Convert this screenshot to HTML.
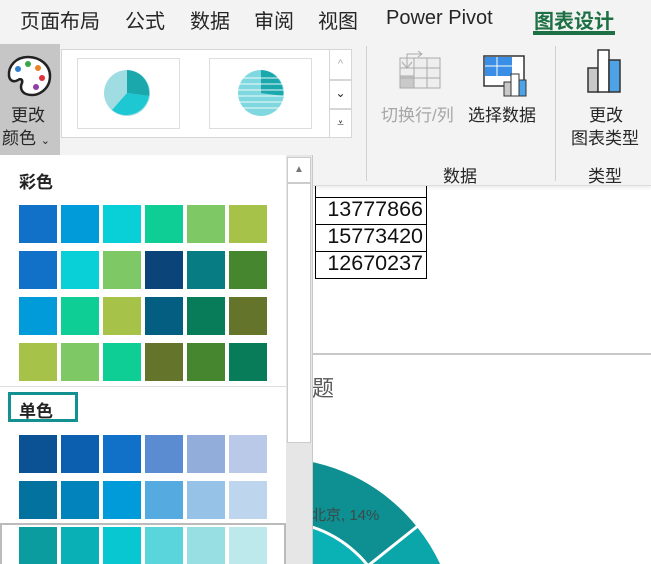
<!DOCTYPE html>
<html><head><meta charset="utf-8"><style>
*{margin:0;padding:0;box-sizing:border-box}
html,body{width:651px;height:564px;overflow:hidden}
body{background:#fff;position:relative;font-family:"Liberation Sans","Noto Sans CJK SC",sans-serif;color:#262626}
.a{position:absolute}
.t{font-size:20px;top:5px;color:#262626}
.sw{position:absolute;width:38px;height:38px}
</style></head><body>
<div class="a" style="left:0;top:0;width:651px;height:186px;background:#f3f3f3;border-bottom:1px solid #dcdcdc;box-shadow:0 2px 3px rgba(0,0,0,.08)"></div>
<div class="a t" style="left:20px">页面布局</div>
<div class="a t" style="left:125px">公式</div>
<div class="a t" style="left:190px">数据</div>
<div class="a t" style="left:254px">审阅</div>
<div class="a t" style="left:318px">视图</div>
<div class="a t" style="left:386px;top:7px">Power Pivot</div>
<div class="a t" style="left:534px;color:#1e7145;font-weight:bold">图表设计</div>
<div class="a" style="left:533px;top:31px;width:82px;height:4px;background:#1e7145"></div>

<div class="a" style="left:0;top:44px;width:60px;height:112px;background:#c6c6c6"></div>
<svg class="a" style="left:6px;top:54px" width="46" height="46" viewBox="0 0 46 46">
<path d="M22 3C10 3 2 12 3 22c1 6 6 6 9 4 3-2 5 0 4 3-2 4-1 9 4 11 12 4 24-5 24-18C44 11 34 3 22 3z" fill="#fff" stroke="#222" stroke-width="2.5"/>
<circle cx="12" cy="15" r="3" fill="#2f7fd0"/><circle cx="22" cy="10" r="3" fill="#3aa64a"/><circle cx="32" cy="14" r="3" fill="#e8832a"/><circle cx="36" cy="24" r="3" fill="#e0303a"/><circle cx="30" cy="33" r="3" fill="#8e3fa8"/></svg>
<div class="a" style="left:11px;top:101px;font-size:17px">更改</div>
<div class="a" style="left:2px;top:124px;font-size:17px">颜色 <span style="font-size:11px">⌄</span></div>

<div class="a" style="left:61px;top:49px;width:269px;height:89px;background:#fff;border:1px solid #d6d6d6"></div>
<div class="a" style="left:77px;top:58px;width:103px;height:71px;background:#fff;border:1px solid #ddd"></div>
<svg class="a" style="left:102px;top:68px" width="50" height="50"><circle cx="25" cy="25" r="23" fill="#9fdde3"/><path d="M25 25V2A23 23 0 0 1 47 28Z" fill="#1aa8ad"/><path d="M25 25L47 28A23 23 0 0 1 10 42Z" fill="#1ec8d3"/></svg>
<div class="a" style="left:209px;top:58px;width:103px;height:71px;background:#fff;border:1px solid #ddd"></div>
<svg class="a" style="left:236px;top:68px" width="50" height="50"><circle cx="25" cy="25" r="23" fill="#7fd8df"/><path d="M25 25V2A23 23 0 0 1 47 28Z" fill="#1aa8ad"/><g stroke="#fff" stroke-width="1.5" opacity=".6"><line x1="0" y1="10" x2="50" y2="10"/><line x1="0" y1="16" x2="50" y2="16"/><line x1="0" y1="22" x2="50" y2="22"/><line x1="0" y1="28" x2="50" y2="28"/><line x1="0" y1="34" x2="50" y2="34"/><line x1="0" y1="40" x2="50" y2="40"/></g></svg>
<div class="a" style="left:329px;top:49px;width:23px;height:31px;background:#fff;border:1px solid #d6d6d6;color:#aaa;font-size:11px;text-align:center;line-height:29px">^</div>
<div class="a" style="left:329px;top:80px;width:23px;height:29px;background:#fff;border:1px solid #d6d6d6;font-size:12px;text-align:center;line-height:25px">⌄</div>
<div class="a" style="left:329px;top:109px;width:23px;height:29px;background:#fff;border:1px solid #d6d6d6;font-size:12px;text-align:center;line-height:27px">⩡</div>

<div class="a" style="left:366px;top:46px;width:1px;height:135px;background:#d0d0d0"></div>
<div class="a" style="left:555px;top:46px;width:1px;height:135px;background:#d0d0d0"></div>
<svg class="a" style="left:396px;top:48px" width="48" height="44"><g fill="#c9c9c9" stroke="#aaa"><rect x="4" y="10" width="40" height="30" fill="#eee"/><rect x="4" y="28" width="14" height="12"/></g><g stroke="#aaa" fill="none"><line x1="4" y1="20" x2="44" y2="20"/><line x1="4" y1="30" x2="44" y2="30"/><line x1="18" y1="10" x2="18" y2="40"/><line x1="31" y1="10" x2="31" y2="40"/><path d="M6 14l5 6 5-6M11 20V6h14M22 3l4 3-4 3"/></g></svg>
<div class="a" style="left:381px;top:101px;font-size:17px;color:#a6a6a6">切换行/列</div>
<svg class="a" style="left:482px;top:54px" width="48" height="44"><rect x="2" y="2" width="40" height="30" fill="#fff" stroke="#333" stroke-width="1.5"/><rect x="3" y="3" width="27" height="19" fill="#3a8ee6"/><g stroke="#fff"><line x1="3" y1="12" x2="30" y2="12"/><line x1="15" y1="3" x2="15" y2="22"/></g><rect x="22" y="28" width="7" height="14" fill="#c8c8c8" stroke="#333"/><rect x="29" y="20" width="8" height="22" fill="#fff" stroke="#333"/><rect x="37" y="26" width="7" height="16" fill="#4ea3e6" stroke="#333"/></svg>
<div class="a" style="left:468px;top:101px;font-size:17px">选择数据</div>
<svg class="a" style="left:585px;top:45px" width="44" height="50"><rect x="3" y="23" width="10" height="24" fill="#c8c8c8" stroke="#333" stroke-width="1.5"/><rect x="13" y="5" width="11" height="42" fill="#fff" stroke="#333" stroke-width="1.5"/><rect x="24" y="15" width="11" height="32" fill="#4ea3e6" stroke="#333" stroke-width="1.5"/></svg>
<div class="a" style="left:589px;top:101px;font-size:17px">更改</div>
<div class="a" style="left:571px;top:124px;font-size:17px">图表类型</div>
<div class="a" style="left:443px;top:162px;font-size:17px">数据</div>
<div class="a" style="left:588px;top:162px;font-size:17px">类型</div>

<div class="a" style="left:315px;top:186px;width:112px;height:93px;border:1px solid #000;border-top:none"></div>
<div class="a" style="left:315px;top:224px;width:112px;height:1px;background:#000"></div>
<div class="a" style="left:315px;top:251px;width:112px;height:1px;background:#000"></div>
<div class="a" style="left:315px;top:197px;width:112px;height:1px;background:#000"></div>
<div class="a" style="left:315px;top:197px;width:108px;text-align:right;font-size:21.5px;color:#111">13777866</div>
<div class="a" style="left:315px;top:224px;width:108px;text-align:right;font-size:21.5px;color:#111">15773420</div>
<div class="a" style="left:315px;top:251px;width:108px;text-align:right;font-size:21.5px;color:#111">12670237</div>
<div class="a" style="left:313px;top:353px;width:338px;height:2px;background:#c8c8c8"></div>
<div class="a" style="left:312px;top:371px;font-size:22px;color:#595959">题</div>
<svg class="a" style="left:300px;top:440px" width="351" height="124"><g transform="translate(-300,-440)">
<path d="M275 640L275 458A182 182 0 0 1 417 527Z" fill="#0e8f91"/>
<path d="M275 640L417 527A182 182 0 0 1 457 650Z" fill="#0aa6a9"/>
<circle cx="275" cy="640" r="119" fill="#0ab2b6" stroke="#fff" stroke-width="3"/>
<line x1="275" y1="640" x2="419" y2="525" stroke="#fff" stroke-width="3"/></g></svg>
<div class="a" style="left:311px;top:504px;font-size:15px;color:#3a4a4a">北京, 14%</div>

<div class="a" style="left:0;top:155px;width:313px;height:409px;background:#fff;border-right:2px solid #c8c8c8"></div>
<div class="a" style="left:286px;top:155px;width:26px;height:409px;background:#e6e6e6"></div>
<div class="a" style="left:287px;top:157px;width:24px;height:26px;background:#fff;border:1px solid #ccc;font-size:10px;color:#777;text-align:center;line-height:24px">▲</div>
<div class="a" style="left:287px;top:183px;width:24px;height:260px;background:#fff;border:1px solid #ccc"></div>
<div class="a" style="left:19px;top:168px;font-size:17px;font-weight:bold;color:#222">彩色</div>
<div class="a" style="left:0;top:386px;width:286px;height:1px;background:#ddd"></div>
<div class="a" style="left:8px;top:392px;width:70px;height:30px;border:3px solid #13908f"></div>
<div class="a" style="left:19px;top:397px;font-size:17px;font-weight:bold;color:#222">单色</div>
<div class="a" style="left:0;top:523px;width:286px;height:41px;border:2px solid #bbb;border-bottom:none"></div>
<div class="sw" style="left:19px;top:205px;background:#1170c8"></div><div class="sw" style="left:61px;top:205px;background:#009bd8"></div><div class="sw" style="left:103px;top:205px;background:#09d0d6"></div><div class="sw" style="left:145px;top:205px;background:#0fce95"></div><div class="sw" style="left:187px;top:205px;background:#7ec966"></div><div class="sw" style="left:229px;top:205px;background:#a6c249"></div>
<div class="sw" style="left:19px;top:251px;background:#1170c8"></div><div class="sw" style="left:61px;top:251px;background:#09d0d6"></div><div class="sw" style="left:103px;top:251px;background:#7ec966"></div><div class="sw" style="left:145px;top:251px;background:#0b4478"></div><div class="sw" style="left:187px;top:251px;background:#077c82"></div><div class="sw" style="left:229px;top:251px;background:#45862f"></div>
<div class="sw" style="left:19px;top:297px;background:#009bd8"></div><div class="sw" style="left:61px;top:297px;background:#0fce95"></div><div class="sw" style="left:103px;top:297px;background:#a6c249"></div><div class="sw" style="left:145px;top:297px;background:#035e82"></div><div class="sw" style="left:187px;top:297px;background:#087c59"></div><div class="sw" style="left:229px;top:297px;background:#64742a"></div>
<div class="sw" style="left:19px;top:343px;background:#a6c249"></div><div class="sw" style="left:61px;top:343px;background:#7ec966"></div><div class="sw" style="left:103px;top:343px;background:#0fce95"></div><div class="sw" style="left:145px;top:343px;background:#64742a"></div><div class="sw" style="left:187px;top:343px;background:#45862f"></div><div class="sw" style="left:229px;top:343px;background:#087c59"></div>
<div class="sw" style="left:19px;top:435px;background:#0b5294"></div><div class="sw" style="left:61px;top:435px;background:#0c5fae"></div><div class="sw" style="left:103px;top:435px;background:#1170c8"></div><div class="sw" style="left:145px;top:435px;background:#5b8bd1"></div><div class="sw" style="left:187px;top:435px;background:#93addb"></div><div class="sw" style="left:229px;top:435px;background:#bbc9e8"></div>
<div class="sw" style="left:19px;top:481px;background:#04729f"></div><div class="sw" style="left:61px;top:481px;background:#0283bc"></div><div class="sw" style="left:103px;top:481px;background:#009bd8"></div><div class="sw" style="left:145px;top:481px;background:#55aae0"></div><div class="sw" style="left:187px;top:481px;background:#95c2e6"></div><div class="sw" style="left:229px;top:481px;background:#bdd6ee"></div>
<div class="sw" style="left:19px;top:527px;height:37px;background:#0a9c9e"></div><div class="sw" style="left:61px;top:527px;height:37px;background:#09b1b6"></div><div class="sw" style="left:103px;top:527px;height:37px;background:#09c7d0"></div><div class="sw" style="left:145px;top:527px;height:37px;background:#5ad5dc"></div><div class="sw" style="left:187px;top:527px;height:37px;background:#97dfe3"></div><div class="sw" style="left:229px;top:527px;height:37px;background:#bde9ec"></div>
</body></html>
